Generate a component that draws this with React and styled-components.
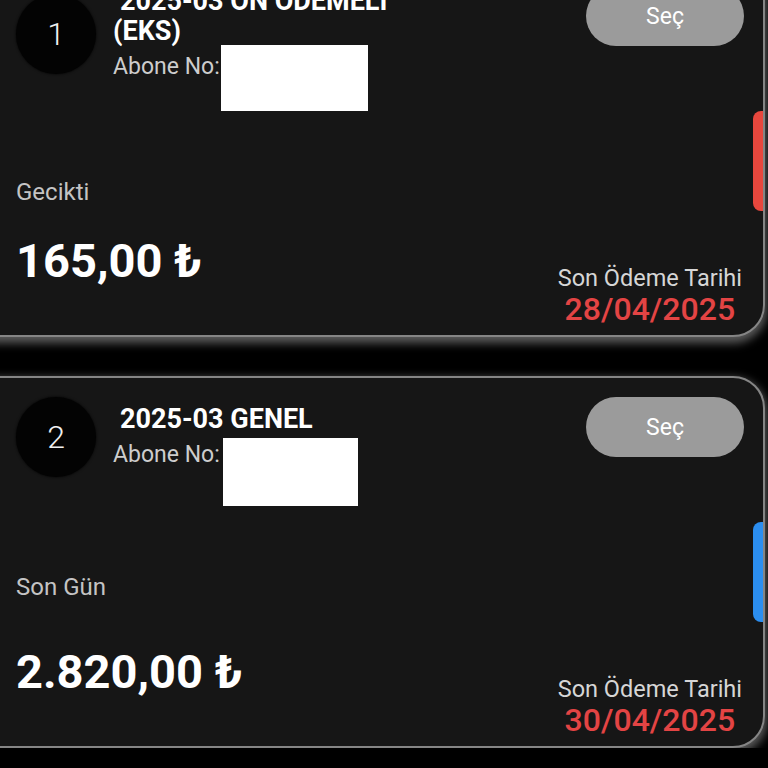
import styled, { createGlobalStyle } from "styled-components";

const GlobalStyle = createGlobalStyle`
  html, body {
    margin: 0;
    padding: 0;
    background: #000;
    overflow: hidden;
  }
  body {
    font-family: Roboto, "Noto Sans", "DejaVu Sans", sans-serif;
  }
`;

const bills = [
  {
    no: 1,
    title: "2025-03 ÖN ÖDEMELİ (EKS)",
    status: "Gecikti",
    amount: "165,00 ₺",
    date: "28/04/2025",
    bar: "#e8473d",
    mask: { top: -7, left: 1, width: 147, height: 66 },
  },
  {
    no: 2,
    title: "2025-03 GENEL",
    status: "Son Gün",
    amount: "2.820,00 ₺",
    date: "30/04/2025",
    bar: "#2b8ef0",
    mask: { top: -2, left: 3, width: 135, height: 68 },
  },
];

const App = () => {
  return (
    <>
      <GlobalStyle />
      <List>
        {bills.map((b) => (
          <Card key={b.no}>
            <Header>
              <NumberCircle>{b.no}</NumberCircle>
              <Info>
                <Title>{b.title}</Title>
                <AboneRow>
                  <AboneLabel>
                    Abone No:
                    <Mask
                      $top={b.mask.top}
                      $left={b.mask.left}
                      $width={b.mask.width}
                      $height={b.mask.height}
                    />
                  </AboneLabel>
                </AboneRow>
              </Info>
              <SelectButton>Seç</SelectButton>
            </Header>
            <Status>{b.status}</Status>
            <Footer>
              <Amount>{b.amount}</Amount>
              <DueBox>
                <DueLabel>Son Ödeme Tarihi</DueLabel>
                <DueDate>{b.date}</DueDate>
              </DueBox>
            </Footer>
            <SideBar $color={b.bar} />
          </Card>
        ))}
      </List>
    </>
  );
};

const List = styled.div`
  display: flex;
  flex-direction: column;
  gap: 39px;
  margin-top: -35px;
`;

const Card = styled.div`
  position: relative;
  box-sizing: border-box;
  height: 372px;
  margin: 0 3px 0 -40px;
  padding: 19px 19px 8px 54px;
  display: flex;
  flex-direction: column;
  background: #161616;
  border: 2px solid #858585;
  border-radius: 32px;
  box-shadow: 0 4px 10px 2px rgba(170, 170, 170, 0.55);
`;

const Header = styled.div`
  display: flex;
  align-items: center;
`;

const NumberCircle = styled.div`
  flex: 0 0 80px;
  height: 80px;
  margin-right: 17px;
  border-radius: 50%;
  background: #030303;
  box-shadow: 0 0 3px #000;
  color: #f0f0f0;
  font-size: 32px;
  font-weight: 300;
  display: flex;
  align-items: center;
  justify-content: center;
`;

const Info = styled.div`
  display: flex;
  flex-direction: column;
  width: 330px;
`;

const Title = styled.div`
  color: #fff;
  font-size: 27px;
  font-weight: 700;
  line-height: 30px;
  text-indent: 7px;
`;

const AboneRow = styled.div`
  display: flex;
  margin-top: 6px;
  color: #cdcdcd;
  font-size: 23px;
  line-height: 30px;
`;

const AboneLabel = styled.span`
  position: relative;
`;

// beyaz kutu (abone no gizli)
const Mask = styled.span`
  position: absolute;
  left: calc(100% + ${(p) => p.$left}px);
  top: ${(p) => p.$top}px;
  width: ${(p) => p.$width}px;
  height: ${(p) => p.$height}px;
  background: #fff;
`;

const SelectButton = styled.div`
  align-self: flex-start;
  margin-left: auto;
  width: 158px;
  height: 60px;
  border-radius: 30px;
  background: #9b9b9b;
  color: #fff;
  font-size: 23px;
  display: flex;
  align-items: center;
  justify-content: center;
`;

const Status = styled.div`
  margin-top: 96px;
  color: #c4c4c4;
  font-size: 24px;
  line-height: 28px;
`;

const Footer = styled.div`
  margin-top: auto;
  display: flex;
  justify-content: space-between;
  align-items: flex-end;
`;

const Amount = styled.div`
  margin-bottom: 38px;
  color: #fff;
  font-size: 47px;
  font-weight: 700;
  line-height: 56px;
`;

const DueBox = styled.div`
  display: flex;
  flex-direction: column;
  align-items: center;
  margin-right: 2px;
`;

const DueLabel = styled.div`
  color: #d6d6d6;
  font-size: 23.5px;
  line-height: 26px;
`;

const DueDate = styled.div`
  color: #e34444;
  font-size: 32px;
  font-weight: 500;
  line-height: 36px;
`;

const SideBar = styled.div`
  position: absolute;
  right: 0;
  top: 144px;
  width: 10px;
  height: 100px;
  border-radius: 8px 0 0 8px;
  background: ${(p) => p.$color};
`;

export default App;
